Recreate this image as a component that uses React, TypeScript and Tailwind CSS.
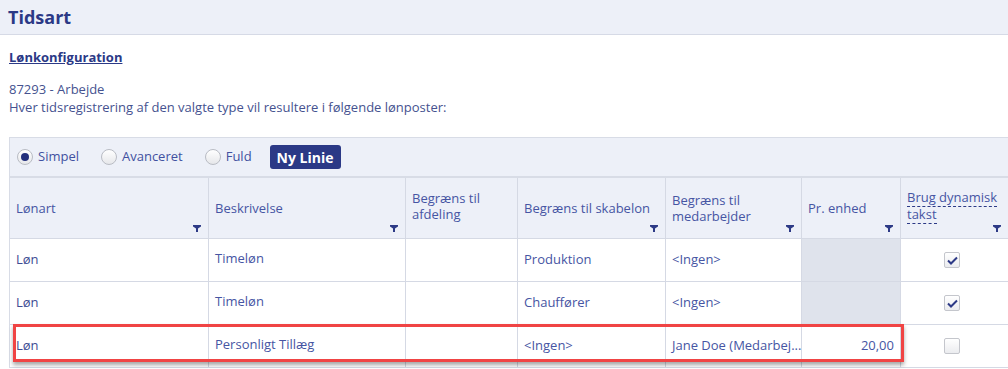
import { useState } from "react";

const cols = "grid grid-cols-[199px_197px_112px_148px_136px_99px_1fr]";

interface Row {
  art: string;
  desc: string;
  afd: string;
  skab: string;
  med: string;
  enhed: string;
  dyn: boolean;
}

const rows: Row[] = [
  { art: "Løn", desc: "Timeløn", afd: "", skab: "Produktion", med: "<Ingen>", enhed: "", dyn: true },
  { art: "Løn", desc: "Timeløn", afd: "", skab: "Chauffører", med: "<Ingen>", enhed: "", dyn: true },
  { art: "Løn", desc: "Personligt Tillæg", afd: "", skab: "<Ingen>", med: "Jane Doe (Medarbej...", enhed: "20,00", dyn: false },
];

const Funnel = () => (
  <svg width="8" height="7" viewBox="0 0 8 7" className="absolute right-[7px] bottom-[6px]">
    <path d="M0 0H8V1.5L5 3.5V7H3V3.5L0 1.5Z" fill="#2d3a86" />
  </svg>
);

const Radio = ({ checked, label, onClick }: { checked: boolean; label: string; onClick: () => void }) => (
  <button onClick={onClick} className="flex items-center gap-[5px] text-[13px] text-[#4150a0]">
    <span className="w-[16px] h-[16px] rounded-full border border-[#b9bcc4] bg-gradient-to-b from-white to-[#e6e7ea] flex items-center justify-center">
      {checked && <span className="w-[8px] h-[8px] rounded-full bg-[#232f7c]" />}
    </span>
    {label}
  </button>
);

const Check = ({ on }: { on: boolean }) => (
  <span className="w-[16px] h-[16px] rounded-[2px] border border-[#c4c6cc] bg-gradient-to-b from-white to-[#ebecef] flex items-center justify-center">
    {on && (
      <svg width="11" height="9" viewBox="0 0 11 9">
        <path d="M1 4.5L4 7.5L10 1.5" stroke="#2d3a86" strokeWidth="2" fill="none" />
      </svg>
    )}
  </span>
);

const HeadCell = ({ children, last }: { children: React.ReactNode; last?: boolean }) => (
  <div className={`relative h-[60px] flex items-center px-[6px] leading-[16px] ${last ? "" : "border-r border-[#d5d9e4]"}`}>
    <div>{children}</div>
    <Funnel />
  </div>
);

export default function App() {
  const [mode, setMode] = useState<string>("simpel");

  return (
    <div className="w-[1008px] h-[369px] overflow-hidden bg-white text-[13px] text-[#3d4b93]" style={{ fontFamily: '"Open Sans", "Liberation Sans", sans-serif' }}>
      <div className="h-[35px] bg-[#edf0f8] border-b border-[#d6dae6] flex items-center px-[8px]">
        <h1 className="text-[18px] font-bold text-[#2b3986]">Tidsart</h1>
      </div>

      <div className="pl-[9px] pt-[12px]">
        <div className="font-bold underline text-[#2b3986] leading-[20px]">Lønkonfiguration</div>
        <div className="mt-[13px] leading-[18px] text-[#45528f]">87293 - Arbejde</div>
        <div className="leading-[18px] text-[#45528f]">Hver tidsregistrering af den valgte type vil resultere i følgende lønposter:</div>

        <div className="mt-[21px] bg-[#edf0f8] border-l border-t border-[#d8dce6]">
          <div className="h-[40px] flex items-center gap-[22px] pl-[7px] border-b-2 border-[#d8dce6]">
            <Radio checked={mode === "simpel"} label="Simpel" onClick={() => setMode("simpel")} />
            <Radio checked={mode === "avanceret"} label="Avanceret" onClick={() => setMode("avanceret")} />
            <Radio checked={mode === "fuld"} label="Fuld" onClick={() => setMode("fuld")} />
            <button className="-ml-[4px] h-[24px] px-[7px] rounded-[3px] bg-[#2b3986] text-white font-bold text-[14px]">Ny Linie</button>
          </div>

          <div className={`${cols} text-[#4655a3] border-b border-[#d5d9e4]`}>
            <HeadCell>Lønart</HeadCell>
            <HeadCell>Beskrivelse</HeadCell>
            <div className="h-[60px] flex items-start pt-[12px] px-[6px] leading-[16px] border-r border-[#d5d9e4]">
              Begræns til<br />afdeling
            </div>
            <HeadCell>Begræns til skabelon</HeadCell>
            <HeadCell>Begræns til<br />medarbejder</HeadCell>
            <HeadCell>Pr. enhed</HeadCell>
            <div className="relative h-[60px] flex items-start pt-[11px] px-[6px] leading-[17px]">
              <div>
                <span className="border-b border-dashed border-[#2b3986]">Brug dynamisk</span>
                <br />
                <span className="border-b border-dashed border-[#2b3986]">takst</span>
              </div>
              <Funnel />
            </div>
          </div>

          <div className="relative bg-white">
            {rows.map((r, i) => (
              <div key={i} className={`${cols} h-[43px] border-b border-[#d5d9e4]`}>
                <div className="flex items-center px-[6px] border-r border-[#d5d9e4]">{r.art}</div>
                <div className="flex items-center pb-[3px] px-[6px] border-r border-[#d5d9e4] text-[#4655a3]">{r.desc}</div>
                <div className="border-r border-[#d5d9e4]">{r.afd}</div>
                <div className="flex items-center px-[6px] border-r border-[#d5d9e4] text-[#4655a3]">{r.skab}</div>
                <div className="flex items-center px-[6px] border-r border-[#d5d9e4] text-[#4655a3] whitespace-nowrap">{r.med}</div>
                <div className={`flex items-center justify-end px-[6px] border-r border-[#d5d9e4] text-[#4655a3] ${r.enhed ? "" : "bg-[#dfe3ec]"}`}>{r.enhed}</div>
                <div className="flex items-center justify-center pr-[5px]">
                  <Check on={r.dyn} />
                </div>
              </div>
            ))}
            <div className="absolute left-[3px] top-[85px] w-[891px] h-[38px] border-[3px] border-[#f04444] shadow-[0_3px_4px_rgba(0,0,0,0.35)] pointer-events-none" />
          </div>
        </div>
      </div>
    </div>
  );
}
